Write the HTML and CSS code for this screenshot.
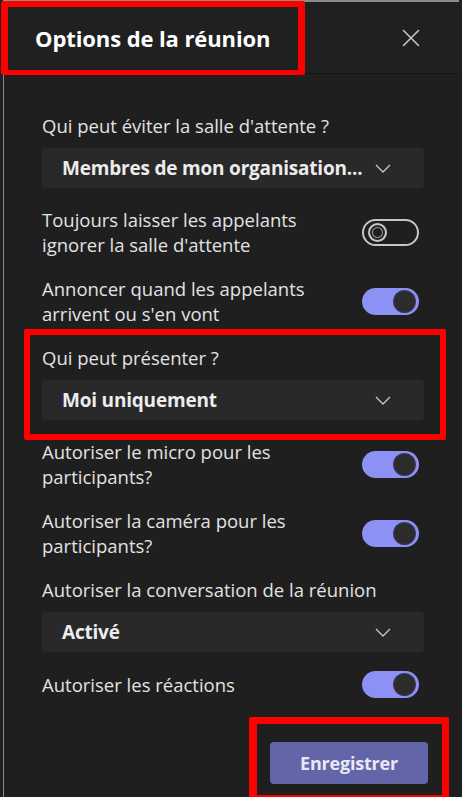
FILE: index.html
```html
<!DOCTYPE html>
<html lang="fr">
<head>
<meta charset="utf-8">
<title>Options de la réunion</title>
<link rel="stylesheet" href="styles.css">
</head>
<body>
<div class="panel">
  <header class="head">
    <h1 class="title">Options de la réunion</h1>
    <button class="close" aria-label="Fermer">
      <svg width="18" height="18" viewBox="0 0 18 18"><path d="M1.5 1.5 L16.5 16.5 M16.5 1.5 L1.5 16.5" stroke="#c4c4c4" stroke-width="1.6" fill="none" stroke-linecap="round"/></svg>
    </button>
  </header>
  <main class="content">
    <section class="field">
      <div class="label">Qui peut éviter la salle d'attente ?</div>
      <div class="select"><span class="value">Membres de mon organisation...</span><svg class="chev" width="16" height="9" viewBox="0 0 16 9"><path d="M1 1 L8 8 L15 1" stroke="#c8c8c8" stroke-width="1.3" fill="none"/></svg></div>
    </section>
    <div class="row">
      <div class="label">Toujours laisser les appelants<br>ignorer la salle d'attente</div>
      <span class="toggle off"><span class="knob"></span></span>
    </div>
    <div class="row">
      <div class="label">Annoncer quand les appelants<br>arrivent ou s'en vont</div>
      <span class="toggle on"><span class="knob"></span></span>
    </div>
    <section class="field">
      <div class="label">Qui peut présenter ?</div>
      <div class="select"><span class="value">Moi uniquement</span><svg class="chev" width="16" height="9" viewBox="0 0 16 9"><path d="M1 1 L8 8 L15 1" stroke="#c8c8c8" stroke-width="1.3" fill="none"/></svg></div>
    </section>
    <div class="row">
      <div class="label">Autoriser le micro pour les<br>participants?</div>
      <span class="toggle on"><span class="knob"></span></span>
    </div>
    <div class="row">
      <div class="label">Autoriser la caméra pour les<br>participants?</div>
      <span class="toggle on"><span class="knob"></span></span>
    </div>
    <section class="field">
      <div class="label">Autoriser la conversation de la réunion</div>
      <div class="select"><span class="value">Activé</span><svg class="chev" width="16" height="9" viewBox="0 0 16 9"><path d="M1 1 L8 8 L15 1" stroke="#c8c8c8" stroke-width="1.3" fill="none"/></svg></div>
    </section>
    <div class="row single">
      <div class="label">Autoriser les réactions</div>
      <span class="toggle on"><span class="knob"></span></span>
    </div>
  </main>
  <footer class="foot">
    <button class="save">Enregistrer</button>
  </footer>
</div>
<div class="mark mark-title"></div>
<div class="mark mark-present"></div>
<div class="mark mark-save"></div>
</body>
</html>
```

FILE: styles.css
```css
* { box-sizing: border-box; }
html, body {
  margin: 0;
  padding: 0;
  background: #1f1f1f;
  width: 462px;
  height: 797px;
  overflow: hidden;
}
body {
  font-family: "Open Sans", "Noto Sans", sans-serif;
  color: #e4e4e4;
  position: relative;
}
.panel {
  margin-left: 3px;
  width: 456px;
  height: 797px;
  border-left: 1px solid #8c8c8c;
  border-top: 2px solid #8c8c8c;
  background: #1f1f1f;
  display: flex;
  flex-direction: column;
}
.head {
  height: 72px;
  display: flex;
  align-items: center;
  justify-content: space-between;
  padding: 0 39px 0 31px;
  border-bottom: 1px solid #151515;
  background: #202020;
}
.title {
  margin: 0;
  font-size: 22px;
  font-weight: 700;
  color: #ffffff;
  letter-spacing: -0.1px;
}
.close {
  background: none;
  border: 0;
  padding: 0;
  width: 18px;
  height: 18px;
  display: flex;
}
.content {
  padding: 39px 35px 0 38px;
  display: flex;
  flex-direction: column;
  gap: 19px;
}
.field {
  display: flex;
  flex-direction: column;
  gap: 10px;
}
.label {
  font-size: 18.5px;
  line-height: 25px;
  color: #e2e2e2;
  letter-spacing: 0;
  white-space: nowrap;
}
.select {
  height: 40px;
  background: #292929;
  border-radius: 4px;
  display: flex;
  align-items: center;
  justify-content: space-between;
  padding: 0 33px 0 20px;
}
.value {
  font-size: 19px;
  font-weight: 700;
  color: #ececec;
  letter-spacing: -0.2px;
}
.row {
  display: flex;
  align-items: center;
  justify-content: space-between;
  padding-right: 5px;
}
.toggle {
  width: 57px;
  height: 27px;
  border-radius: 14px;
  display: flex;
  align-items: center;
  padding: 0 4px;
  flex-shrink: 0;
}
.toggle.off {
  border: 2px solid #c6c6c6;
  justify-content: flex-start;
}
.toggle.off .knob {
  width: 19px;
  height: 19px;
  border-radius: 50%;
  border: 2px solid #c6c6c6;
  box-shadow: inset 0 0 0 2px #1f1f1f, inset 0 0 0 3px #9a9a9a;
}
.toggle.on {
  background: #8d91f5;
  justify-content: flex-end;
}
.toggle.on .knob {
  width: 21px;
  height: 21px;
  border-radius: 50%;
  background: #2c2c2c;
  box-shadow: 0 0 0 1px #3a3a5a;
}
.foot {
  margin-top: auto;
  display: flex;
  justify-content: flex-end;
  padding: 0 31px 13px 0;
}
.save {
  width: 158px;
  height: 42px;
  border: 0;
  border-radius: 4px;
  background: #6365a9;
  color: #e8e8f4;
  font-family: "Open Sans", "Noto Sans", sans-serif;
  font-size: 18px;
  font-weight: 700;
  letter-spacing: -0.2px;
}
.mark {
  position: absolute;
  border: 6px solid #ff0000;
  border-radius: 2px;
  pointer-events: none;
}
.mark-title { left: 1px; top: 1px; width: 304px; height: 74px; border-width: 6px 7px 5px 7px; }
.mark-present { left: 24px; top: 329px; width: 422px; height: 111px; }
.mark-save { left: 249px; top: 717px; width: 200px; height: 84px; border-width: 7px 7px 6px 8px; }
```
